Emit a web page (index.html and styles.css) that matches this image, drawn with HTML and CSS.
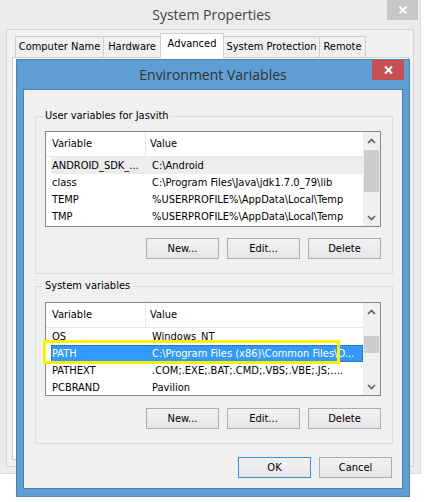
FILE: index.html
```html
<!DOCTYPE html>
<html>
<head>
<meta charset="utf-8">
<title>Environment Variables</title>
<link rel="stylesheet" href="styles.css">
</head>
<body>
<div class="desktop">
  <div class="syswin">
    <div class="sys-title">
      <span></span>
      <span class="sys-title-text">System Properties</span>
      <div class="sys-close">
        <svg width="10" height="10" viewBox="0 0 10 10"><path d="M1.5 1.5 L8.5 8.5 M8.5 1.5 L1.5 8.5" stroke="#fff" stroke-width="1.8"/></svg>
      </div>
    </div>
    <div class="sys-client">
      <div class="tabs">
        <div class="tab t1">Computer Name</div>
        <div class="tab t2">Hardware</div>
        <div class="tab t3 active">Advanced</div>
        <div class="tab t4">System Protection</div>
        <div class="tab t5">Remote</div>
      </div>
      <div class="tabpanel"></div>
    </div>
  </div>

  <div class="envwin">
    <div class="env-title">
      <span></span>
      <span class="env-title-text">Environment Variables</span>
      <div class="env-close">
        <svg width="11" height="10" viewBox="0 0 11 10"><path d="M2 1.5 L9 8.5 M9 1.5 L2 8.5" stroke="#fff" stroke-width="2.2"/></svg>
      </div>
    </div>
    <div class="env-client">
      <div class="group group-user">
        <div class="legend">User variables for Jasvith</div>
        <div class="listview lv-user">
          <div class="lv-body">
            <div class="lv-header">
              <div class="hcell hc1">Variable</div>
              <div class="hcell hc2">Value</div>
            </div>
            <div class="lv-rows">
              <div class="row hover"><span>ANDROID_SDK_...</span><span>C:\Android</span></div>
              <div class="row"><span>class</span><span>C:\Program Files\Java\jdk1.7.0_79\lib</span></div>
              <div class="row"><span>TEMP</span><span>%USERPROFILE%\AppData\Local\Temp</span></div>
              <div class="row"><span>TMP</span><span>%USERPROFILE%\AppData\Local\Temp</span></div>
            </div>
          </div>
          <div class="scrollbar">
            <div class="sb-btn"><svg width="9" height="6" viewBox="0 0 9 6"><path d="M1 5 L4.5 1.5 L8 5" fill="none" stroke="#606060" stroke-width="1.6"/></svg></div>
            <div class="sb-track"><div class="sb-thumb thumb-user"></div></div>
            <div class="sb-btn"><svg width="9" height="6" viewBox="0 0 9 6"><path d="M1 1 L4.5 4.5 L8 1" fill="none" stroke="#606060" stroke-width="1.6"/></svg></div>
          </div>
        </div>
        <div class="btnrow">
          <div class="btn">New...</div>
          <div class="btn">Edit...</div>
          <div class="btn">Delete</div>
        </div>
      </div>

      <div class="group group-sys">
        <div class="legend">System variables</div>
        <div class="listview lv-sys">
          <div class="lv-body">
            <div class="lv-header">
              <div class="hcell hc1">Variable</div>
              <div class="hcell hc2">Value</div>
            </div>
            <div class="lv-rows">
              <div class="row"><span>OS</span><span>Windows_NT</span></div>
              <div class="row selected"><span>PATH</span><span>C:\Program Files (x86)\Common Files\O...</span></div>
              <div class="row"><span>PATHEXT</span><span>.COM;.EXE;.BAT;.CMD;.VBS;.VBE;.JS;....</span></div>
              <div class="row"><span>PCBRAND</span><span>Pavilion</span></div>
            </div>
          </div>
          <div class="scrollbar">
            <div class="sb-btn"><svg width="9" height="6" viewBox="0 0 9 6"><path d="M1 5 L4.5 1.5 L8 5" fill="none" stroke="#606060" stroke-width="1.6"/></svg></div>
            <div class="sb-track"><div class="sb-thumb thumb-sys"></div></div>
            <div class="sb-btn"><svg width="9" height="6" viewBox="0 0 9 6"><path d="M1 1 L4.5 4.5 L8 1" fill="none" stroke="#606060" stroke-width="1.6"/></svg></div>
          </div>
          <div class="mark"></div>
        </div>
        <div class="btnrow btnrow-sys">
          <div class="btn">New...</div>
          <div class="btn">Edit...</div>
          <div class="btn">Delete</div>
        </div>
      </div>

      <div class="btnrow dialog-buttons">
        <div class="btn default">OK</div>
        <div class="btn">Cancel</div>
      </div>
    </div>
  </div>
</div>
</body>
</html>
```

FILE: styles.css
```css
* { box-sizing: border-box; }
html, body { margin: 0; padding: 0; background: #ffffff; }
body {
  width: 425px;
  height: 502px;
  overflow: hidden;
  font-family: "DejaVu Sans Condensed", "DejaVu Sans", sans-serif;
  font-size: 11px;
  color: #000;
}
.desktop {
  position: relative;
  width: 425px;
  height: 502px;
}

/* background window: System Properties */
.syswin {
  width: 421px;
  height: 474px;
  background: #ebebeb;
  border-right: 1px solid #dcdcdc;
  border-bottom: 1px solid #dcdcdc;
  display: flex;
  flex-direction: column;
}
.sys-title {
  height: 29px;
  display: grid;
  grid-template-columns: 1fr auto 1fr;
  align-items: start;
}
.sys-title-text {
  font-family: "Open Sans", "Noto Sans", sans-serif;
  font-size: 14px;
  color: #444;
  line-height: 29px;
  padding-left: 3px;
}
.sys-close {
  justify-self: end;
  margin-right: 2px;
  width: 31px;
  height: 20px;
  background: #c7c7c7;
  display: flex;
  align-items: center;
  justify-content: center;
}
.sys-client {
  margin: 0 6px;
  height: 438px;
  border: 1px solid #d6d6d6;
  background: #f0f0f0;
  display: flex;
  flex-direction: column;
}
.tabs {
  display: flex;
  align-items: flex-end;
  padding-left: 8px;
  height: 27px;
}
.tab {
  height: 21px;
  border: 1px solid #cfcfcf;
  border-bottom: none;
  background: #f0f0f0;
  text-align: center;
  line-height: 19px;
  margin-right: -1px;
  font-size: 11px;
}
.tab.active {
  height: 24px;
  background: #fff;
  line-height: 20px;
  position: relative;
  z-index: 1;
  margin-bottom: -1px;
  height: 25px;
}
.t1 { width: 89px; }
.t2 { width: 58px; }
.t3 { width: 64px; }
.t4 { width: 97px; }
.t5 { width: 47px; }
.tabpanel {
  margin: 0 4px 0 5px;
  height: 403px;
  border: 1px solid #cfcfcf;
  background: #fff;
}

/* foreground dialog */
.envwin {
  position: absolute;
  left: 16px;
  top: 59px;
  width: 394px;
  height: 438px;
  background: #5f9ed2;
  border: 1px solid #4b84b8;
  display: flex;
  flex-direction: column;
}
.env-title {
  height: 29px;
  display: grid;
  grid-template-columns: 1fr auto 1fr;
  align-items: start;
}
.env-title-text {
  font-family: "Open Sans", "Noto Sans", sans-serif;
  font-size: 14px;
  color: #333;
  line-height: 29px;
}
.env-close {
  justify-self: end;
  margin-right: 5px;
  width: 32px;
  height: 20px;
  background: #c75050;
  display: flex;
  align-items: center;
  justify-content: center;
}
.env-client {
  margin: 0 6px 7px 6px;
  flex: 1;
  background: #f0f0f0;
  border: 1px solid #4a7fb0;
  padding: 26px 8px 0 11px;
}

.group {
  border: 1px solid #dcdcdc;
  width: 358px;
  padding: 0 11px 14px 9px;
}
.group-sys { margin-top: 12px; }
.legend {
  width: fit-content;
  margin: -9px 0 0 -2px;
  padding: 0 2px;
  line-height: 16px;
  background: #f0f0f0;
}

.listview {
  position: relative;
  margin-top: 7px;
  height: 96px;
  border: 1px solid #828790;
  background: #fff;
  display: flex;
}
.lv-sys { margin-top: 8px; height: 94px; }
.lv-body {
  flex: 1;
  overflow: hidden;
}
.lv-header {
  display: flex;
  height: 25px;
  border-bottom: 1px solid #e3e8ef;
}
.hcell {
  line-height: 24px;
}
.hc1 {
  width: 100px;
  padding-left: 6px;
  border-right: 1px solid #e3e8ef;
}
.hc2 { padding-left: 4px; }
.row {
  margin-left: 5px;
  height: 17px;
  line-height: 17px;
  display: grid;
  grid-template-columns: 100px 1fr;
  white-space: nowrap;
  overflow: hidden;
}
.row span { padding-left: 1px; overflow: hidden; }
.row.hover { background: #ededed; }
.row.selected {
  background: #3399ff;
  color: #fff;
  outline: 1px dotted #1d5b9c;
  outline-offset: -1px;
}

.scrollbar {
  width: 17px;
  background: #f0f0f0;
  display: flex;
  flex-direction: column;
}
.sb-btn {
  height: 17px;
  display: flex;
  align-items: center;
  justify-content: center;
}
.sb-track {
  flex: 1;
  padding: 0 1px;
}
.sb-thumb {
  background: #cdcdcd;
}
.thumb-user { margin-top: 1px; height: 42px; }
.thumb-sys { margin-top: 16px; height: 17px; }

.mark {
  position: absolute;
  left: -3px;
  top: 37px;
  width: 297px;
  height: 24px;
  border: 3px solid #fff200;
}

.btnrow {
  display: flex;
  justify-content: flex-end;
  gap: 8px;
  margin-top: 11px;
}
.btnrow-sys { margin-top: 12px; }
.btn {
  width: 73px;
  height: 21px;
  border: 1px solid #adadad;
  background: linear-gradient(#f2f2f2, #e6e6e6);
  text-align: center;
  line-height: 19px;
}
.btn.default { border-color: #3c8ce0; }
.dialog-buttons {
  margin-top: 13px;
  width: 358px;
  padding-right: 1px;
}
```
